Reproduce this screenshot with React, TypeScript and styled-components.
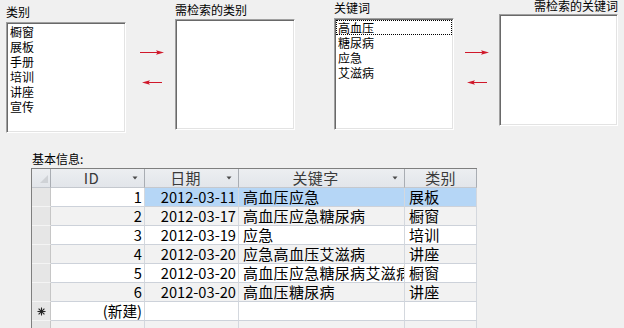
import React from "react";
import styled, { createGlobalStyle } from "styled-components";

const GlobalStyle = createGlobalStyle`
  html, body { margin: 0; padding: 0; background: #f0f0f0; }
  body {
    width: 624px; height: 328px; overflow: hidden;
    font-family: "Noto Sans CJK SC", sans-serif; color: #000;
  }
`;

const Page = styled.div`
  width: 624px;
  height: 328px;
  display: flex;
  flex-direction: column;
  overflow: hidden;
`;

const TopRow = styled.div`
  display: flex;
  align-items: flex-start;
  padding-left: 6px;
  height: 133px;
`;

const Group = styled.div<{ $ml: number; $top: number; $gap: number; $w: number }>`
  margin-left: ${(p) => p.$ml}px;
  padding-top: ${(p) => p.$top}px;
  width: ${(p) => p.$w}px;
  display: flex;
  flex-direction: column;
  gap: ${(p) => p.$gap}px;
`;

const Label = styled.div<{ $align?: "left" | "right"; $lh?: number }>`
  font-size: 12px;
  line-height: ${(p) => p.$lh ?? 14}px;
  text-align: ${(p) => p.$align ?? "left"};
  white-space: nowrap;
`;

const ListBox = styled.div<{ $h: number }>`
  height: ${(p) => p.$h}px;
  box-sizing: border-box;
  background: #fff;
  border-top: 1px solid #a0a0a0;
  border-left: 1px solid #a0a0a0;
  border-right: 1px solid #ffffff;
  border-bottom: 1px solid #ffffff;
  box-shadow: inset 1px 1px 0 #696969, inset -1px -1px 0 #e3e3e3;
  padding: 1px;
`;

const Item = styled.div<{ $focus?: boolean }>`
  font-size: 12px;
  line-height: 13px;
  padding: 0 1px;
  white-space: nowrap;
  border: 1px ${(p) => (p.$focus ? "dotted #000" : "solid transparent")};
`;

const ArrowCol = styled.div<{ $ml: number }>`
  margin-left: ${(p) => p.$ml}px;
  padding-top: 49px;
  width: 24px;
  display: flex;
  flex-direction: column;
  gap: 23px;
`;

const ArrowSvg = styled.svg`
  display: block;
  width: 24px;
  height: 7px;
`;

const RightArrow = () => (
  <ArrowSvg viewBox="0 0 24 7">
    <line x1="0" y1="3.5" x2="19" y2="3.5" stroke="#d0182a" strokeWidth="1" />
    <polygon points="16,1.2 24,3.5 16,5.8 17.5,3.5" fill="#d0182a" />
  </ArrowSvg>
);

const LeftArrow = () => (
  <ArrowSvg viewBox="0 0 24 7">
    <line x1="5" y1="3.5" x2="22" y2="3.5" stroke="#d0182a" strokeWidth="1" />
    <polygon points="10,1.2 2,3.5 10,5.8 8.5,3.5" fill="#d0182a" />
  </ArrowSvg>
);

const InfoSection = styled.div`
  margin-top: 19px;
  padding-left: 31px;
  display: flex;
  flex-direction: column;
  gap: 2px;
`;

const InfoLabel = styled.div`
  font-size: 12px;
  line-height: 14px;
  padding-left: 1px;
`;

const COLS = "19px 94px 94px 166px 72px";

const Sheet = styled.div`
  width: 446px;
  box-sizing: border-box;
  border-left: 1px solid #7f7f7f;
  border-top: 1px solid #7f7f7f;
  background: #fff;
`;

const SheetRow = styled.div`
  display: grid;
  grid-template-columns: ${COLS};
  height: 19px;
`;

const HeadCell = styled.div`
  box-sizing: border-box;
  display: flex;
  align-items: center;
  background: linear-gradient(#eceef1, #e2e5ea);
  border-right: 1px solid #a9adb3;
  border-bottom: 1px solid #c4c8ce;
  font-size: 15px;
  letter-spacing: 0.3px;
  line-height: 18px;
  color: #3a3a3a;
`;

const HeadTitle = styled.span`
  flex: 1;
  text-align: center;
  white-space: nowrap;
`;

const DropSvg = styled.svg`
  display: block;
  width: 6px;
  height: 4px;
  margin-right: 6px;
  flex: none;
`;

const DropArrow = () => (
  <DropSvg viewBox="0 0 6 4">
    <polygon points="0.5,0.5 5.5,0.5 3,3.5" fill="#4a4a4a" />
  </DropSvg>
);

const CornerSvg = styled.svg`
  display: block;
  width: 8px;
  height: 8px;
  margin-left: 8px;
  margin-top: 2px;
`;

const SelCell = styled.div`
  box-sizing: border-box;
  display: flex;
  align-items: center;
  justify-content: center;
  background: #e6e6e6;
  border-right: 1px solid #c6c6c6;
  border-bottom: 1px solid #f4f4f4;
`;

const Cell = styled.div<{ $bg: string; $align?: "left" | "right"; $num?: boolean }>`
  box-sizing: border-box;
  background: ${(p) => p.$bg};
  border-right: 1px solid #d4d8de;
  border-bottom: 1px solid #cdd2da;
  font-size: ${(p) => (p.$num ? "14.67px" : "15px")};
  letter-spacing: ${(p) => (p.$num ? "0" : "0.3px")};
  line-height: 18px;
  white-space: nowrap;
  overflow: hidden;
  text-align: ${(p) => p.$align ?? "left"};
  padding: ${(p) => (p.$align === "right" ? "0 2px 0 0" : "0 0 0 4px")};
  text-overflow: clip;
`;

const StarSvg = styled.svg`
  display: block;
  width: 9px;
  height: 9px;
`;

const Star = () => (
  <StarSvg viewBox="0 0 9 9">
    <g stroke="#222" strokeWidth="1.1">
      <line x1="4.5" y1="0.5" x2="4.5" y2="8.5" />
      <line x1="0.5" y1="4.5" x2="8.5" y2="4.5" />
      <line x1="1.6" y1="1.6" x2="7.4" y2="7.4" />
      <line x1="7.4" y1="1.6" x2="1.6" y2="7.4" />
    </g>
  </StarSvg>
);

type Rec = { id: number; date: string; kw: string; cat: string };

const records: Rec[] = [
  { id: 1, date: "2012-03-11", kw: "高血压应急", cat: "展板" },
  { id: 2, date: "2012-03-17", kw: "高血压应急糖尿病", cat: "橱窗" },
  { id: 3, date: "2012-03-19", kw: "应急", cat: "培训" },
  { id: 4, date: "2012-03-20", kw: "应急高血压艾滋病", cat: "讲座" },
  { id: 5, date: "2012-03-20", kw: "高血压应急糖尿病艾滋病", cat: "橱窗" },
  { id: 6, date: "2012-03-20", kw: "高血压糖尿病", cat: "讲座" },
];

const categories = ["橱窗", "展板", "手册", "培训", "讲座", "宣传"];
const keywords = ["高血压", "糖尿病", "应急", "艾滋病"];

const rowBg = (i: number) => (i % 2 === 1 ? "#f2f2f2" : "#ffffff");
const SEL = "#b5d6f6";

export default function App() {
  return (
    <>
      <GlobalStyle />
      <Page>
        <TopRow>
          <Group $ml={0} $top={5} $gap={3} $w={120}>
            <Label>类别</Label>
            <ListBox $h={111}>
              {categories.map((c) => (
                <Item key={c}>{c}</Item>
              ))}
            </ListBox>
          </Group>
          <ArrowCol $ml={14}>
            <RightArrow />
            <LeftArrow />
          </ArrowCol>
          <Group $ml={11} $top={3} $gap={2} $w={120}>
            <Label>需检索的类别</Label>
            <ListBox $h={111} />
          </Group>
          <Group $ml={39} $top={1} $gap={3} $w={120}>
            <Label>关键词</Label>
            <ListBox $h={112}>
              {keywords.map((k, i) => (
                <Item key={k} $focus={i === 0}>
                  {k}
                </Item>
              ))}
            </ListBox>
          </Group>
          <ArrowCol $ml={11}>
            <RightArrow />
            <LeftArrow />
          </ArrowCol>
          <Group $ml={10} $top={0} $gap={2} $w={119}>
            <Label $align="right" $lh={12}>
              需检索的关键词
            </Label>
            <ListBox $h={112} />
          </Group>
        </TopRow>
        <InfoSection>
          <InfoLabel>基本信息:</InfoLabel>
          <Sheet>
            <SheetRow>
              <HeadCell>
                <CornerSvg viewBox="0 0 8 8">
                  <polygon points="0,8 8,0 8,8" fill="#cfd2d6" />
                </CornerSvg>
              </HeadCell>
              <HeadCell>
                <HeadTitle>ID</HeadTitle>
                <DropArrow />
              </HeadCell>
              <HeadCell>
                <HeadTitle>日期</HeadTitle>
                <DropArrow />
              </HeadCell>
              <HeadCell>
                <HeadTitle>关键字</HeadTitle>
                <DropArrow />
              </HeadCell>
              <HeadCell>
                <HeadTitle>类别</HeadTitle>
              </HeadCell>
            </SheetRow>
            {records.map((r, i) => {
              const bg = rowBg(i);
              const sel = i === 0;
              return (
                <SheetRow key={r.id}>
                  <SelCell />
                  <Cell $bg={bg} $align="right" $num>
                    {r.id}
                  </Cell>
                  <Cell $bg={sel ? SEL : bg} $align="right" $num>
                    {r.date}
                  </Cell>
                  <Cell $bg={sel ? SEL : bg}>{r.kw}</Cell>
                  <Cell $bg={sel ? SEL : bg}>{r.cat}</Cell>
                </SheetRow>
              );
            })}
            <SheetRow>
              <SelCell>
                <Star />
              </SelCell>
              <Cell $bg="#ffffff" $align="right" $num>
                (新建)
              </Cell>
              <Cell $bg="#ffffff" />
              <Cell $bg="#ffffff" />
              <Cell $bg="#ffffff" />
            </SheetRow>
            <SheetRow>
              <SelCell />
              <Cell $bg="#f2f2f2" />
              <Cell $bg="#f2f2f2" />
              <Cell $bg="#f2f2f2" />
              <Cell $bg="#f2f2f2" />
            </SheetRow>
          </Sheet>
        </InfoSection>
      </Page>
    </>
  );
}
